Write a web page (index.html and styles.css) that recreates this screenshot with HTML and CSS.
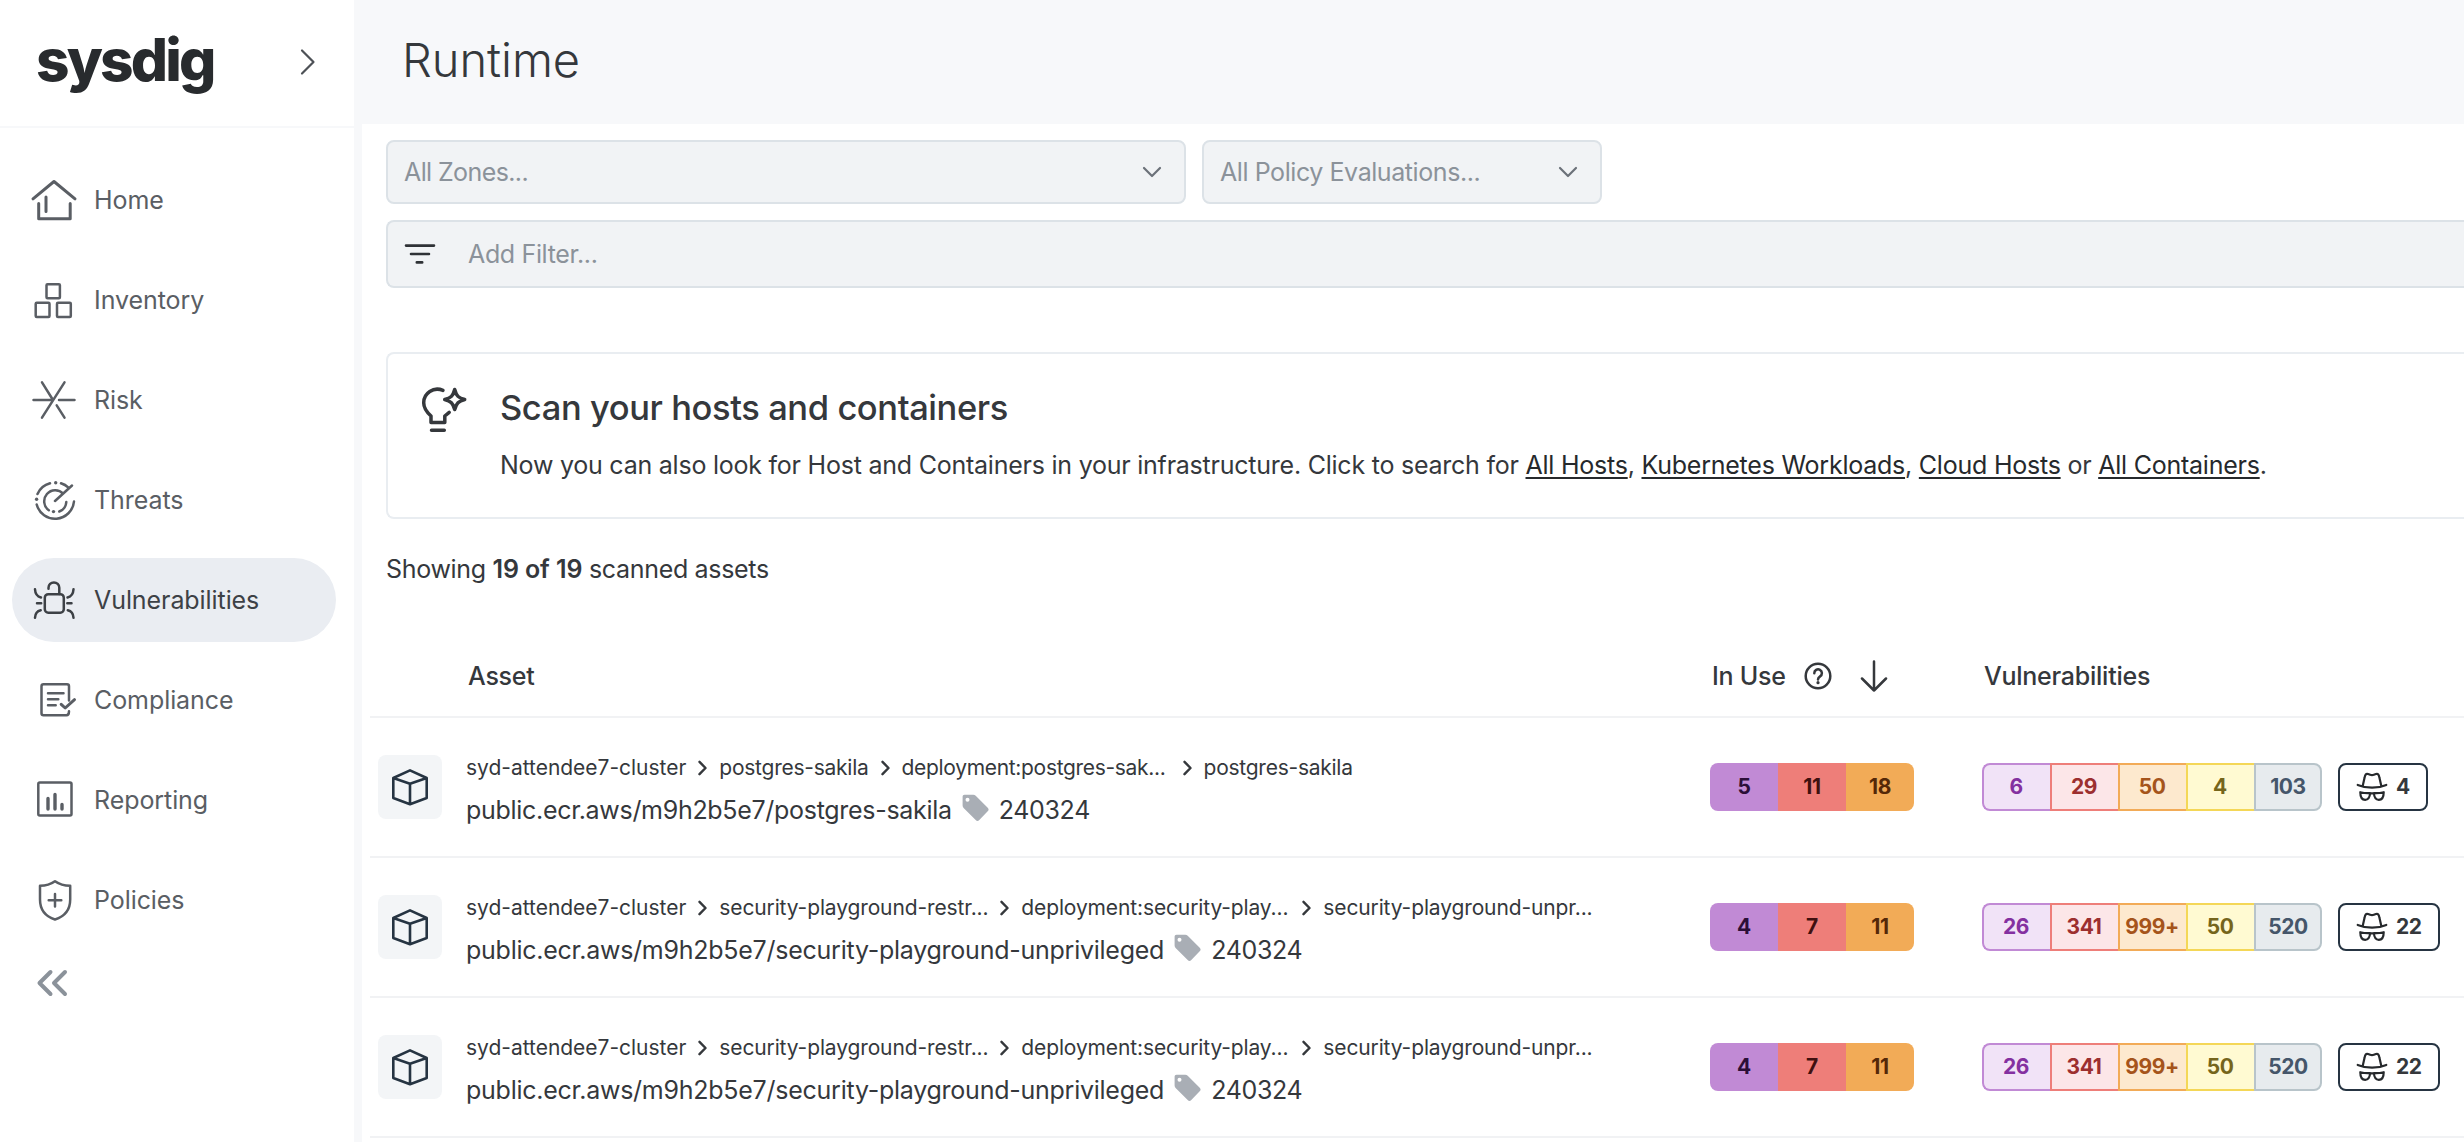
FILE: index.html
```html
<!DOCTYPE html>
<html lang="en">
<head>
<meta charset="utf-8">
<title>Runtime</title>
<link rel="stylesheet" href="styles.css">
</head>
<body>
<svg class="defs" width="0" height="0">
  <symbol id="cube" viewBox="0 0 40 40"><path d="M20 3.4 36.7 11v20L20 37.2 3.3 31V11ZM3.3 11 20 16.8 36.7 11M20 16.8v20.4"/></symbol>
  <symbol id="sep" viewBox="0 0 10 16"><path d="m1.5 1.8 6 6.2-6 6.2"/></symbol>
  <symbol id="tag" viewBox="0 0 28 28"><path fill-rule="evenodd" d="M2.5.8h8.8c1 0 1.7.3 2.4.9l12 12c1.2 1.2 1.2 2.4 0 3.6l-8.4 8.8c-1.2 1.2-2.4 1.2-3.6 0L1.6 14C.9 13.3.6 12.6.6 11.6V2.8c0-1.2.7-2 1.9-2ZM5.5 3.8a2 2 0 1 0 0 4 2 2 0 0 0 0-4Z"/></symbol>
  <symbol id="spy" viewBox="0 0 32 30"><path d="M1.7 12.9c8.800 3.700 20 3.700 28.600 0M6.800 13.600l1.800-8C9.100 2.600 10 1.400 12 2l2.200.8c1.200.5 2.400.5 3.600 0L20 2c2-.6 2.900.6 3.400 3.600l1.800 8M4.300 20.200c0 5 1.900 7.600 4.900 7.600s4.600-2.400 4.900-6.800c-2.600.2-6.600-.1-9.800-.8ZM27.700 20.200c0 5-1.900 7.600-4.900 7.600s-4.600-2.400-4.900-6.800c2.600.2 6.600-.1 9.800-.8ZM14.300 21.300h3.400"/></symbol>
</svg>

<aside class="sidebar">
  <div class="brand">
    <span class="logo">sysdig</span>
    <svg class="brand-arrow" width="18" height="28" viewBox="0 0 18 28"><path d="m3 2.500 11.500 11.500L3 25.500"/></svg>
  </div>
  <nav class="nav">
    <a class="nav-item"><svg class="nav-icon heavy" viewBox="0 0 48 48"><path d="M3 22.800 24 5.500l21 17.300M8.700 27.500v15.300h31.500V27.500M16 21v14.500"/></svg><span>Home</span></a>
    <a class="nav-item"><svg class="nav-icon" viewBox="0 0 48 48"><rect x="16.500" y="8.300" width="13.400" height="14" rx="1"/><rect x="5.700" y="26.700" width="13.800" height="14.200" rx="1"/><rect x="27" y="26.700" width="13.800" height="14.200" rx="1"/></svg><span>Inventory</span></a>
    <a class="nav-item"><svg class="nav-icon" viewBox="0 0 48 48"><path d="M3.500 24h19M29 24h15.500M34.500 6.300 12 41.700M12 6.300 23 24M26.700 29.300l7.800 12.400"/></svg><span>Risk</span></a>
    <a class="nav-item"><svg class="nav-icon" viewBox="0 0 48 48"><path d="M44 25.500A19 19 0 0 1 6.700 28.500M7.500 18A19 19 0 0 1 20 7.300M31 7.300a19 19 0 0 1 7.500 4.400M25 25 42 9.500M18.800 34.200A11 11 0 1 1 33.200 17.700M36.300 26a11 11 0 0 1-7 9.500"/><g class="dots"><circle cx="25.700" cy="6.700" r="1.700"/><circle cx="6.600" cy="23.300" r="1.700"/><circle cx="23.500" cy="35.600" r="1.700"/></g></svg><span>Threats</span></a>
    <a class="nav-item active"><svg class="nav-icon" viewBox="0 0 48 48"><rect x="14.800" y="18.200" width="19" height="18.500" rx="3.500"/><path d="M29.300 18v-6.200a5.300 5.300 0 0 0-10.800 0v1M5 13.200c.2 4.300 2.300 7.300 6 8.300M43.500 13.200c-.2 4.300-2.300 7.300-6 8.300M7 27.300h4.200M37.300 27.300h4.200M10.700 34.200c-3.500.8-5.500 3.500-5.700 7.500M37.800 34.200c3.500.8 5.500 3.500 5.700 7.500"/></svg><span>Vulnerabilities</span></a>
    <a class="nav-item"><svg class="nav-icon" viewBox="0 0 48 48"><path d="M39 24.500V10.300c0-1.200-.8-2-2-2H13.500c-1.200 0-2 .8-2 2v27c0 1.200.8 2 2 2h23c1.500 0 2.500-1.500 2.500-4M18 17.300h15.500M18 23.300h10.300M18 29.300h7.700"/><path class="bold" d="m31.200 28.300 4 3.700 9.300-8.300"/></svg><span>Compliance</span></a>
    <a class="nav-item"><svg class="nav-icon" viewBox="0 0 48 48"><rect x="8.300" y="6.500" width="33.200" height="33" rx="1.500"/><path class="bar" d="M18 22.500V33M25 18.500V33M32 28.500V33"/></svg><span>Reporting</span></a>
    <a class="nav-item"><svg class="nav-icon" viewBox="0 0 48 48"><path d="M25 5.300c-3.700 2.700-8.800 4.500-15 4.500v13.700C10 33 15 40.300 25 43.500c10-3.200 15.200-10.500 15.200-20V9.800c-6.400 0-11.500-1.800-15.200-4.500ZM25 18v12.500M18.700 24.200h12.600"/></svg><span>Policies</span></a>
  </nav>
  <svg class="collapse" width="32" height="28" viewBox="0 0 32 28"><path d="M14.500 3 3.500 14l11 11M29 3 18 14l11 11"/></svg>
</aside>

<main class="main">
  <header class="page-head"><h1>Runtime</h1></header>
  <section class="panel">
    <div class="selects">
      <div class="field zones"><span>All Zones...</span><svg class="caret" width="20" height="12" viewBox="0 0 20 12"><path d="m2 2 8 8 8-8"/></svg></div>
      <div class="field policies"><span>All Policy Evaluations...</span><svg class="caret" width="20" height="12" viewBox="0 0 20 12"><path d="m2 2 8 8 8-8"/></svg></div>
    </div>
    <div class="field filter"><svg class="filter-icon" width="32" height="22" viewBox="0 0 32 22"><path d="M2 2.600h28M7 11h18M12.800 19.400h5.400"/></svg><span>Add Filter...</span></div>

    <div class="card">
      <svg class="bulb" width="50" height="50" viewBox="0 0 50 50"><path d="M25 6.400C15.500 2.400 5.700 9 5.700 18.700c0 6.300 3.500 9.800 7.300 13.300v6.400h13.800V32l4.400-3.600M13.500 46.300h12.800M36.700 5.500c1.700 6.500 3.800 8.500 10 10-6.200 1.700-8.300 3.700-10 10-1.700-6.300-3.800-8.300-10-10 6.200-1.500 8.300-3.500 10-10Z"/></svg>
      <div>
        <h2>Scan your hosts and containers</h2>
        <p>Now you can also look for Host and Containers in your infrastructure. Click to search for <a>All Hosts</a>, <a>Kubernetes Workloads</a>, <a>Cloud Hosts</a> or <a>All Containers</a>.</p>
      </div>
    </div>

    <p class="count">Showing <b>19 of 19</b> scanned assets</p>

    <div class="table">
      <div class="row head">
        <span></span>
        <span class="th">Asset</span>
        <span class="th use">In Use
          <svg class="help" width="28" height="28" viewBox="0 0 28 28"><circle cx="14" cy="14" r="12.300"/><path d="M10.300 11.200a3.800 3.800 0 1 1 5.800 3.200c-1.300.9-2.100 1.500-2.100 3.100"/><circle class="dot" cx="14" cy="20.700" r="1.600"/></svg>
          <svg class="sort" width="28" height="32" viewBox="0 0 28 32"><path d="M14 1.500v29M2 18.500l12 12 12-12"/></svg>
        </span>
        <span class="th">Vulnerabilities</span>
      </div>

      <div class="row">
        <span class="tile"><svg><use href="#cube"/></svg></span>
        <div class="asset">
          <div class="crumbs"><span>syd-attendee7-cluster</span><svg><use href="#sep"/></svg><span class="ns">postgres-sakila</span><svg><use href="#sep"/></svg><span class="cut tight">deployment:postgres-sak...</span><svg><use href="#sep"/></svg><span class="ns">postgres-sakila</span></div>
          <div class="image"><span class="short">public.ecr.aws/m9h2b5e7/postgres-sakila</span><svg><use href="#tag"/></svg><span class="ver">240324</span></div>
        </div>
        <div class="pills solid"><b class="crit">5</b><b class="high">11</b><b class="med">18</b></div>
        <div class="vulns">
          <div class="pills soft"><b class="crit">6</b><b class="high">29</b><b class="med">50</b><b class="low">4</b><b class="neg">103</b></div>
          <div class="exploit"><svg><use href="#spy"/></svg><b>4</b></div>
        </div>
      </div>

      <div class="row">
        <span class="tile"><svg><use href="#cube"/></svg></span>
        <div class="asset">
          <div class="crumbs"><span>syd-attendee7-cluster</span><svg><use href="#sep"/></svg><span class="cut">security-playground-restr...</span><svg><use href="#sep"/></svg><span class="cut">deployment:security-play...</span><svg><use href="#sep"/></svg><span>security-playground-unpr...</span></div>
          <div class="image"><span>public.ecr.aws/m9h2b5e7/security-playground-unprivileged</span><svg><use href="#tag"/></svg><span class="ver">240324</span></div>
        </div>
        <div class="pills solid"><b class="crit">4</b><b class="high">7</b><b class="med">11</b></div>
        <div class="vulns">
          <div class="pills soft"><b class="crit">26</b><b class="high">341</b><b class="med">999+</b><b class="low">50</b><b class="neg">520</b></div>
          <div class="exploit"><svg><use href="#spy"/></svg><b>22</b></div>
        </div>
      </div>

      <div class="row">
        <span class="tile"><svg><use href="#cube"/></svg></span>
        <div class="asset">
          <div class="crumbs"><span>syd-attendee7-cluster</span><svg><use href="#sep"/></svg><span class="cut">security-playground-restr...</span><svg><use href="#sep"/></svg><span class="cut">deployment:security-play...</span><svg><use href="#sep"/></svg><span>security-playground-unpr...</span></div>
          <div class="image"><span>public.ecr.aws/m9h2b5e7/security-playground-unprivileged</span><svg><use href="#tag"/></svg><span class="ver">240324</span></div>
        </div>
        <div class="pills solid"><b class="crit">4</b><b class="high">7</b><b class="med">11</b></div>
        <div class="vulns">
          <div class="pills soft"><b class="crit">26</b><b class="high">341</b><b class="med">999+</b><b class="low">50</b><b class="neg">520</b></div>
          <div class="exploit"><svg><use href="#spy"/></svg><b>22</b></div>
        </div>
      </div>
    </div>
  </section>
</main>
</body>
</html>
```
FILE: styles.css
```css
* { box-sizing: border-box; }
html, body { margin: 0; height: 100%; overflow: hidden; }
body {
  display: flex;
  background: #f7f8fa;
  color: #35383c;
  font: 400 25px/36px Inter, "Open Sans", sans-serif;
  letter-spacing: -0.011em;
}
h1, h2, p { margin: 0; }
svg { flex: none; fill: none; stroke: currentColor; stroke-linecap: round; stroke-linejoin: round; }
.defs { position: absolute; }

/* Sidebar */
.sidebar { flex: none; width: 354px; background: #fff; }
.brand {
  display: flex;
  align-items: center;
  justify-content: space-between;
  height: 128px;
  padding: 0 37px 2px 36px;
  border-bottom: 2px solid #f7f8fa;
}
.logo { margin-top: -4px; color: #282b2e; font-size: 58.5px; font-weight: 800; line-height: 70px; letter-spacing: -0.048em; }
.brand-arrow { stroke-width: 2.200; color: #4d5156; }
.nav { display: flex; flex-direction: column; gap: 16px; padding: 30px 18px 0 12px; }
.nav-item {
  display: flex;
  align-items: center;
  gap: 16px;
  height: 84px;
  padding-left: 18px;
  border-radius: 42px;
  color: #5a5e64;
  letter-spacing: -0.003em;
}
.nav-item.active { background: #eaedf2; color: #3d4146; }
.nav-icon { width: 48px; height: 48px; stroke-width: 2.500; }
.nav-icon.heavy { stroke-width: 3; }
.nav-icon .bar { stroke-width: 3.400; }
.nav-icon .bold { stroke-width: 3; }
.dots { fill: currentColor; stroke: none; }
.collapse { display: block; margin: 27px 0 0 36px; color: #8b929a; stroke-width: 4; }

/* Page */
.main { flex: 1; min-width: 0; display: flex; flex-direction: column; }
.page-head { display: flex; align-items: center; height: 124px; padding: 0 0 4px 48px; }
h1 { font-size: 47px; font-weight: 300; line-height: 60px; letter-spacing: -0.001em; }
.panel { flex: 1; min-height: 0; margin-left: 8px; padding: 16px 0 0 24px; background: #fff; }

.selects { display: flex; gap: 16px; margin-bottom: 16px; }
.field {
  display: flex;
  align-items: center;
  justify-content: space-between;
  border: 2px solid #dce2e7;
  border-radius: 8px;
  background: #f1f3f5;
  color: #8b929a;
}
.zones, .policies { height: 64px; padding: 0 22px 0 16px; }
.zones { width: 800px; letter-spacing: -0.024em; }
.policies { width: 400px; letter-spacing: -0.017em; }
.caret { stroke-width: 2.200; color: #6b7179; }
.filter {
  justify-content: flex-start;
  gap: 32px;
  height: 68px;
  padding-left: 16px;
  border-right: 0;
  border-radius: 8px 0 0 8px;
  letter-spacing: -0.014em;
}
.filter-icon { stroke-width: 2.600; color: #2f3236; }

.card {
  display: flex;
  gap: 32px;
  height: 167px;
  margin-top: 64px;
  padding: 30px 0 0 30px;
  border: 2px solid #e9edf1;
  border-right: 0;
  border-radius: 8px 0 0 8px;
}
.bulb { stroke-width: 3.500; }
h2 { font-size: 34.500px; font-weight: 500; line-height: 48px; letter-spacing: -0.012em; }
.card p { margin-top: 15px; white-space: nowrap; letter-spacing: -0.0093em; }
.card a {
  color: #26292c;
  text-decoration: underline;
  text-decoration-thickness: 2px;
  text-underline-offset: 3px;
  text-decoration-skip-ink: none;
}
.count { margin-top: 32px; letter-spacing: -0.013em; }
.count b { font-weight: 600; letter-spacing: -0.004em; }

/* Table */
.table { margin: 49px 0 0 -16px; }
.row {
  display: grid;
  grid-template-columns: 96px 1244px 272px 1fr;
  align-items: center;
  height: 140px;
  border-bottom: 2px solid #f1f2f4;
}
.row.head { height: 82px; }
.th { display: flex; align-items: center; padding-left: 2px; font-weight: 500; letter-spacing: -0.010em; }
.help { margin-left: 18px; stroke-width: 2.500; }
.help .dot { fill: currentColor; stroke: none; }
.sort { margin-left: 28px; stroke-width: 2.500; }
.tile {
  display: flex;
  align-items: center;
  justify-content: center;
  width: 64px;
  height: 64px;
  margin-left: 8px;
  border-radius: 8px;
  background: #f3f5f7;
}
.tile svg { width: 40px; height: 40px; color: #263442; stroke-width: 2.600; }
.asset { padding-top: 6px; white-space: nowrap; }
.crumbs { display: flex; align-items: center; height: 30px; font-size: 21px; line-height: 30px; letter-spacing: -0.006em; }
.crumbs span:first-child { letter-spacing: -0.001em; }
.crumbs .ns { letter-spacing: -0.012em; }
.crumbs svg { width: 10px; height: 16px; margin: 0 11px 0 12px; stroke-width: 2.400; }
.crumbs .cut { width: 269px; }
.crumbs .tight { letter-spacing: -0.015em; }
.image { display: flex; align-items: center; margin-top: 9px; letter-spacing: -0.010em; }
.image .short { letter-spacing: -0.012em; }
.image svg { width: 28px; height: 28px; margin: -3px 9px 0 10px; fill: #a9aeb5; stroke: none; }
.ver { letter-spacing: -0.013em; }

.pills, .pills b, .exploit { display: flex; align-items: center; height: 48px; }
.pills b { justify-content: center; width: 68px; }
.pills b, .exploit b { font-size: 21px; font-weight: 700; letter-spacing: -0.020em; }
.pills b:first-child { border-radius: 8px 0 0 8px; }
.pills b:last-child { border-radius: 0 8px 8px 0; }
.solid .crit { background: #c18ad5; color: #2b0f38; }
.solid .high { background: #ee7e79; color: #3f1110; }
.solid .med { background: #f2ab57; color: #542808; }
.soft b { padding-right: 2px; border: 2px solid; border-right-width: 0; }
.soft b:last-child { padding-right: 0; border-right-width: 2px; }
.soft .crit { border-color: #c18ad5; background: #f1e3f7; color: #8430a0; }
.soft .high { border-color: #ee7e79; background: #fce6e8; color: #9c2f2f; }
.soft .med { border-color: #f2ab57; background: #fde9ce; color: #a5541b; }
.soft .low { border-color: #f4d757; background: #fffad2; color: #75651b; }
.soft .neg { border-color: #b8c4ca; background: #e7ebee; color: #45566a; }
.vulns { display: flex; gap: 16px; }
.exploit { gap: 8px; padding: 0 16px; border: 2px solid #263442; border-radius: 8px; background: #fff; }
.exploit svg { width: 32px; height: 30px; color: #26292c; stroke-width: 2.200; }
```
